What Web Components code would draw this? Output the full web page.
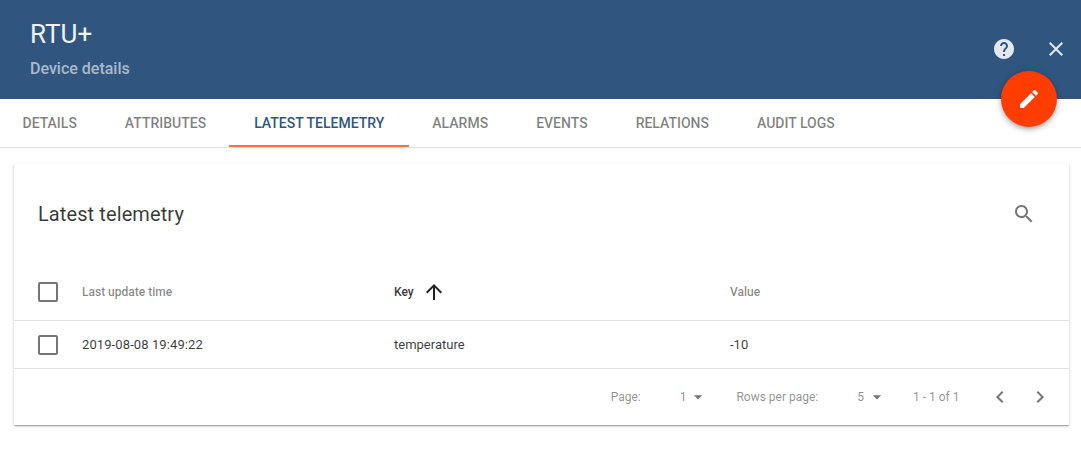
<!DOCTYPE html>
<html><head><meta charset="utf-8">
<style>
html,body{margin:0;padding:0;background:#fff;font-family:Roboto,"Liberation Sans",sans-serif;}
body{width:1081px;height:468px;overflow:hidden;position:relative}
</style></head><body>
<tb-details-page>
<tb-header slot="header" title-text="RTU+" sub="Device details"></tb-header>
<tb-tabs slot="tabs"></tb-tabs>
<tb-card slot="body"></tb-card>
</tb-details-page>
<script>
const ICON={
 help:'<path d="M12 2C6.48 2 2 6.48 2 12s4.48 10 10 10 10-4.48 10-10S17.52 2 12 2zm1 17h-2v-2h2v2zm2.07-7.75l-.9.92C13.45 12.9 13 13.5 13 15h-2v-.5c0-1.1.45-2.1 1.17-2.83l1.24-1.26c.37-.36.59-.86.59-1.41 0-1.1-.9-2-2-2s-2 .9-2 2H8c0-2.21 1.79-4 4-4s4 1.79 4 4c0 .88-.36 1.68-.93 2.25z"/>',
 close:'<path d="M19 6.41L17.59 5 12 10.59 6.41 5 5 6.41 10.59 12 5 17.59 6.41 19 12 13.41 17.59 19 19 17.59 13.41 12z"/>',
 edit:'<path d="M3 17.25V21h3.75L17.81 9.94l-3.75-3.75L3 17.25zM20.71 7.04c.39-.39.39-1.02 0-1.41l-2.34-2.34c-.39-.39-1.02-.39-1.41 0l-1.83 1.83 3.75 3.75 1.83-1.83z"/>',
 search:'<path d="M15.5 14h-.79l-.28-.27C15.41 12.59 16 11.11 16 9.5 16 5.91 13.09 3 9.5 3S3 5.91 3 9.5 5.91 16 9.5 16c1.61 0 3.09-.59 4.23-1.57l.27.28v.79l5 4.99L20.49 19l-4.99-5zm-6 0C7.01 14 5 11.99 5 9.5S7.01 5 9.5 5 14 7.01 14 9.5 11.99 14 9.5 14z"/>',
 up:'<path d="M4 12l1.41 1.41L11 7.83V20h2V7.83l5.58 5.59L20 12l-8-8-8 8z"/>',
 left:'<path d="M15.41 7.41L14 6l-6 6 6 6 1.41-1.41L10.83 12z"/>',
 right:'<path d="M10 6L8.59 7.41 13.17 12l-4.58 4.59L10 18l6-6z"/>',
 drop:'<path d="M7 10l5 5 5-5z"/>'
};
function svg(n,s,c){return `<svg width="${s}" height="${s}" viewBox="0 0 24 24" fill="${c}" style="display:block;flex:none">${ICON[n]}</svg>`}
function def(name,html){customElements.define(name,class extends HTMLElement{connectedCallback(){if(this.shadowRoot)return;const r=this.attachShadow({mode:'open'});r.innerHTML=typeof html==='function'?html(this):html;}})}

def('tb-details-page',`<style>:host{display:block;position:relative;width:1081px;height:468px}
.body{padding:16px 13px 0 14px}
.fab{position:absolute;left:1000.5px;top:71px;width:56px;height:56px;border-radius:50%;background:#ff3d00;display:flex;align-items:center;justify-content:center;box-shadow:0 1px 8px rgba(0,0,0,.2),0 3px 4px rgba(0,0,0,.14),0 3px 3px -2px rgba(0,0,0,.12)}
</style><slot name="header"></slot><slot name="tabs"></slot><div class="body"><slot name="body"></slot></div>
<div class="fab">${svg('edit',24,'#fff')}</div>`);

def('tb-header',h=>`<style>:host{display:flex;height:99px;background:#305680;color:#fff;box-sizing:border-box;padding:0 13px 0 30px;justify-content:space-between}
.t{font-size:26px;line-height:30px;margin-top:19px;color:#eef2f6}
.s{font-size:16px;font-weight:500;line-height:20px;margin-top:10px;color:#a9bacb}
.a{display:flex;gap:28px;align-items:center;height:24px;margin-top:37px}
</style><div><div class="t">${h.getAttribute('title-text')}</div><div class="s">${h.getAttribute('sub')}</div></div>
<div class="a">${svg('help',24,'#e3e8ee')}${svg('close',24,'#e3e8ee')}</div>`);

def('tb-tabs',()=>`<style>:host{display:flex;height:49px;box-sizing:border-box;border-bottom:1px solid #e0e0e0;background:#fff}
.tab{padding:0 24px;height:48px;line-height:48px;font-size:14px;font-weight:500;color:rgba(0,0,0,.5);text-transform:uppercase;box-sizing:border-box;white-space:nowrap}
.tab:first-of-type{padding-left:22.5px}
.on{color:#305680;border-bottom:2px solid #ff7043;margin:0 -1px;padding:0 25px}
</style>${['Details','Attributes','Latest telemetry','Alarms','Events','Relations','Audit logs'].map((t,i)=>`<div class="tab${i==2?' on':''}">${t}</div>`).join('')}`);

def('tb-check','<style>:host{display:block;width:20px;height:20px;box-sizing:border-box;border:2px solid rgba(0,0,0,.54);border-radius:2px}</style>');

def('tb-card',()=>`<style>:host{display:block;width:1054.5px;height:261px;background:#fff;box-shadow:0 1px 3px rgba(0,0,0,.2),0 1px 1px rgba(0,0,0,.14),0 2px 1px -1px rgba(0,0,0,.12);font-size:13px;color:rgba(0,0,0,.78)}
.top{height:100px;display:flex;align-items:center;justify-content:space-between;padding:0 33px 0 24px}
.title{font-size:20px;color:rgba(0,0,0,.78);letter-spacing:.005em}
.row{display:grid;grid-template-columns:44px 312px 336px 1fr;align-items:center;padding-left:24px;border-bottom:1px solid #e0e0e0;box-sizing:border-box}
.head{height:57px;font-size:12px;font-weight:500;color:rgba(0,0,0,.48)}
.cell{height:48px}
.date{letter-spacing:.1px}
.key{display:flex;align-items:center;gap:8px;color:rgba(0,0,0,.8)}
.foot{height:56px;display:flex;align-items:center;justify-content:flex-end;font-size:12px;color:rgba(0,0,0,.46);padding-right:16.5px}
</style>
<div class="top"><div class="title">Latest telemetry</div>${svg('search',24,'rgba(0,0,0,.54)')}</div>
<div class="row head"><tb-check></tb-check><div>Last update time</div><div class="key">Key ${svg('up',24,'rgba(0,0,0,.87)')}</div><div>Value</div></div>
<div class="row cell"><tb-check></tb-check><div class="date">2019-08-08 19:49:22</div><div>temperature</div><div>-10</div></div>
<div class="foot"><span>Page:</span><span style="margin-left:39px">1</span><span style="margin-left:2px">${svg('drop',20,'rgba(0,0,0,.54)')}</span><span style="margin-left:28px">Rows per page:</span><span style="margin-left:39px">5</span><span style="margin-left:2.5px">${svg('drop',20,'rgba(0,0,0,.54)')}</span><span style="margin-left:26.5px">1 - 1 of 1</span><span style="margin-left:28.5px">${svg('left',24,'rgba(0,0,0,.54)')}</span><span style="margin-left:16px">${svg('right',24,'rgba(0,0,0,.54)')}</span></div>`);
</script>
</body></html>
